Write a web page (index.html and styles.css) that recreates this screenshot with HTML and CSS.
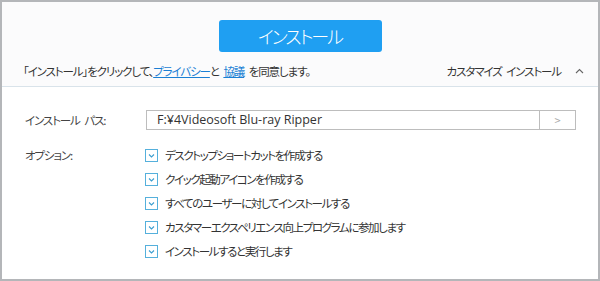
FILE: index.html
```html
<!DOCTYPE html>
<html lang="ja">
<head>
<meta charset="UTF-8" />
<title>インストール</title>
<link rel="stylesheet" href="styles.css">
</head>
<body>
  <div class="window">
    <div class="top">
      <button class="install-btn">インストール</button>
      <div class="agree-row">
        <div class="agree">「インストール」をクリックして、<a href="#">プライバシー</a>と <a href="#">協議</a> を同意します。</div>
        <div class="custom">カスタマイズ インストール <span class="chev">
          <svg width="9" height="6" viewBox="0 0 9 6"><path d="M1 5 L4.5 1.5 L8 5" fill="none" stroke="#666" stroke-width="1.1"/></svg>
        </span></div>
      </div>
    </div>

    <div class="settings">
      <div class="label">インストール パス:</div>
      <div class="path">
        <div class="path-text">F:¥4Videosoft Blu-ray Ripper</div>
        <div class="path-btn">&gt;</div>
      </div>

      <div class="label opt-label">オプション:</div>
      <div class="options">
        <label class="opt"><span class="box"></span>デスクトップショートカットを作成する</label>
        <label class="opt"><span class="box"></span>クイック起動アイコンを作成する</label>
        <label class="opt"><span class="box"></span>すべてのユーザーに対してインストールする</label>
        <label class="opt"><span class="box"></span>カスタマーエクスペリエンス向上プログラムに参加します</label>
        <label class="opt"><span class="box"></span>インストールすると実行します</label>
      </div>
    </div>
  </div>
</body>
</html>
```

FILE: styles.css
```css
body { margin: 0; font-family: "Noto Sans CJK JP", "Noto Sans", sans-serif; font-feature-settings: "palt"; color: #333; }
.window { box-sizing: border-box; width: 600px; height: 281px; border: 2px solid #b4b6b9; background: #fff; }
.top { box-sizing: border-box; background: #fbfbfc; height: 85px; padding-top: 18px; border-bottom: 1px solid #d9e3ea; }
.install-btn { display: block; margin: 0 auto; width: 163px; height: 32px; border: 0; border-radius: 3px; background: #1f9ff2; color: #fff; font-family: inherit; font-size: 18px; font-weight: 300; font-feature-settings: "palt"; letter-spacing: -2px; padding: 0; line-height: 32px; }
.agree-row { display: flex; justify-content: space-between; align-items: center; margin-top: 11px; padding: 0 14px 0 21px; font-size: 11.5px; letter-spacing: -1.1px; word-spacing: 3px; line-height: 16px; }
.agree a { color: #1a7fd4; text-decoration: underline; }
.custom { display: flex; align-items: center; }
.chev { margin-left: 14px; display: flex; }
.settings { display: grid; grid-template-columns: 121px 430px; padding: 23px 0 0 23px; font-size: 11.5px; letter-spacing: -1.1px; word-spacing: 3px; }
.label { line-height: 20px; color: #444; }
.path { display: flex; height: 20px; box-sizing: border-box; border: 1px solid #bdbdbd; letter-spacing: 0; word-spacing: 0; }
.path-text { flex: 1; padding-left: 10px; font-family: "Open Sans", "Noto Sans", sans-serif; font-size: 12.5px; line-height: 18px; color: #333; }
.path-btn { width: 35px; border-left: 1px solid #bdbdbd; text-align: center; color: #aaa; font-size: 11px; line-height: 18px; }
.opt-label { margin-top: 15px; }
.options { display: flex; flex-direction: column; gap: 4px; margin-top: 15px; letter-spacing: -1.4px; }
.opt { display: flex; align-items: center; height: 20px; color: #333; }
.box { box-sizing: border-box; flex: none; width: 13px; height: 13px; border: 1px solid #55b0dc; margin: 0 7px 0 -1px; background: #fff url("data:image/svg+xml,%3Csvg xmlns='http://www.w3.org/2000/svg' width='11' height='11'%3E%3Cpath d='M3 4.5 L5.5 7 L8 4.5' fill='none' stroke='%233c9ed0' stroke-width='1.1'/%3E%3C/svg%3E") no-repeat center; }
```
